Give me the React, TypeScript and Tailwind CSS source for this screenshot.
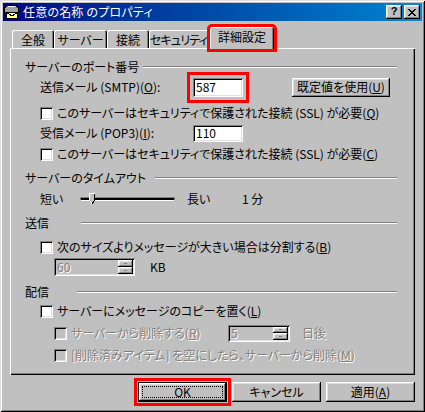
import React from 'react';

// classic 3D bevels
const sunken =
  'shadow-[inset_1px_1px_0_#808080,inset_-1px_-1px_0_#fff,inset_2px_2px_0_#000,inset_-2px_-2px_0_#dfdfdf]';
const raised =
  'shadow-[inset_-1px_-1px_0_#000,inset_1px_1px_0_#fff,inset_-2px_-2px_0_#808080,inset_2px_2px_0_#dfdfdf]';
const grayed = 'text-[#808080] [text-shadow:1px_1px_0_#fff]';

function Checkbox({ disabled = false }: { disabled?: boolean }) {
  return <div className={`w-[13px] h-[13px] shrink-0 ${disabled ? 'bg-[#c0c0c0]' : 'bg-white'} ${sunken}`} />;
}

function GroupHead({ label, w, h = 'h-[20px]', className = '' }: { label: string; w: string; h?: string; className?: string }) {
  return (
    <div className={`flex items-center ${h} ${className}`}>
      <span className={`shrink-0 ${w}`}>{label}</span>
      <div className="flex-1 h-[2px] border-t border-b border-t-[#808080] border-b-white" />
    </div>
  );
}

function SpinButtons({ w }: { w: string }) {
  return (
    <div className={`flex flex-col ${w} h-full`}>
      {[0, 1].map((i) => (
        <div key={i} className={`flex-1 bg-[#c0c0c0] flex items-center justify-center ${raised}`}>
          <div className="w-[3px] h-[1px] bg-[#808080]" />
        </div>
      ))}
    </div>
  );
}

function Spinner({ value, w, h }: { value: string; w: string; h: string }) {
  return (
    <div className={`flex ${w} ${h} bg-[#c0c0c0] p-[2px] ${sunken}`}>
      <div className={`flex-1 flex items-center pl-[1px] ${grayed}`}>{value}</div>
      <SpinButtons w="w-[15px]" />
    </div>
  );
}

function CloseGlyph() {
  const rows = ['11000011', '01100110', '00111100', '00011000', '00111100', '01100110', '11000011'];
  return (
    <svg width="8" height="7" viewBox="0 0 8 7" shapeRendering="crispEdges">
      {rows.map((r, y) =>
        r.split('').map((c, x) => (c === '1' ? <rect key={`${x}-${y}`} x={x} y={y} width="1" height="1" fill="#000" /> : null))
      )}
    </svg>
  );
}

function Tab({ label, w, selected = false, className = '' }: { label: string; w: string; selected?: boolean; className?: string }) {
  if (selected) {
    return (
      <div
        className={`relative z-10 ${w} h-[22px] -mb-[1px] -ml-[2px] bg-[#c0c0c0] rounded-t-[2px] flex items-center justify-center pb-[3px] shadow-[inset_1px_1px_0_#fff,inset_-1px_0_0_#000,inset_-2px_0_0_#808080] outline-3 outline-[#ff0000] ${className}`}
      >
        {label}
      </div>
    );
  }
  return (
    <div
      className={`${w} h-[18px] bg-[#c0c0c0] rounded-t-[2px] flex items-center justify-center pt-[1px] whitespace-nowrap shadow-[inset_1px_1px_0_#fff,inset_-1px_0_0_#000,inset_-2px_0_0_#808080] ${className}`}
    >
      {label}
    </div>
  );
}

export default function App() {
  return (
    <div
      className={`w-[425px] h-[412px] bg-[#c0c0c0] p-[3px] text-[12px] leading-none text-black font-['Noto_Sans_CJK_JP',sans-serif] [font-feature-settings:'palt'] shadow-[inset_1px_1px_0_#dfdfdf,inset_-1px_-1px_0_#000,inset_2px_2px_0_#fff,inset_-2px_-2px_0_#808080]`}
    >
      {/* title bar */}
      <div className="h-[18px] flex items-center bg-linear-to-r from-[#000080] to-[#1084d0] pr-[2px]">
        <svg width="16" height="16" viewBox="0 0 16 16" className="ml-[1px]" shapeRendering="crispEdges">
          <path d="M3.5 1.5h8l3 3v4h-14v-4z" fill="#a0a0a0" stroke="#000" />
          <path d="M4 2.5h7" stroke="#fff" />
          <rect x="2.5" y="8.5" width="11" height="6" fill="#ffff80" stroke="#000" />
          <path d="M2.5 8.5l5.5 3.5l5.5-3.5" stroke="#000" fill="none" />
        </svg>
        <span className="ml-[3px] text-white tracking-[0.2px]">任意の名称 のプロパティ</span>
        <div className="flex-1" />
        <div className={`w-[16px] h-[14px] bg-[#c0c0c0] flex items-center justify-center ${raised}`}>
          <span className="font-['Liberation_Sans',sans-serif] font-bold text-[11px] leading-none pb-[1px]">?</span>
        </div>
        <div className={`w-[16px] h-[14px] ml-[2px] bg-[#c0c0c0] flex items-center justify-center ${raised}`}>
          <CloseGlyph />
        </div>
      </div>

      <div className="px-[7px]">
        {/* tabs */}
        <div className="mt-[6px] h-[21px] flex items-end pl-[2px] relative z-10">
          <Tab label="全般" w="w-[42px]" />
          <Tab label="サーバー" w="w-[53px]" />
          <Tab label="接続" w="w-[42px]" />
          <Tab label="セキュリティ" w="w-[63px]" className="tracking-[-0.8px] pr-[4px]" />
          <Tab label="詳細設定" w="w-[64px]" selected />
        </div>

        {/* panel */}
        <div className="h-[327px] pt-[9px] pl-[15px] pr-[18px] shadow-[inset_1px_1px_0_#fff,inset_-1px_-1px_0_#000,inset_-2px_-2px_0_#808080]">
          <GroupHead label="サーバーのポート番号" w="w-[118px]" />

          <div className="flex items-center h-[20px] ml-[15px]">
            <span className="w-[153px] shrink-0">
              送信メール (SMTP)(<u>O</u>):
            </span>
            <div className={`w-[50px] h-[19px] bg-white flex items-center pl-[3px] ${sunken} outline-3 outline-[#ff0000] outline-offset-3`}>587</div>
            <div className={`ml-[49px] w-[98px] h-[19px] flex items-center justify-center ${raised}`}>
              既定値を使用(<u>U</u>)
            </div>
          </div>

          <div className="flex items-center gap-[4px] h-[20px] ml-[15px] mt-[6px]">
            <Checkbox />
            <span>
              このサーバーはセキュリティで保護された接続 (SSL) が必要(<u>Q</u>)
            </span>
          </div>

          <div className="flex items-center h-[20px] ml-[15px]">
            <span className="w-[153px] shrink-0">
              受信メール (POP3)(<u>I</u>):
            </span>
            <div className={`w-[50px] h-[17px] bg-white flex items-center pl-[3px] ${sunken}`}>110</div>
          </div>

          <div className="flex items-center gap-[4px] h-[20px] ml-[15px] mt-[1px]">
            <Checkbox />
            <span>
              このサーバーはセキュリティで保護された接続 (SSL) が必要(<u>C</u>)
            </span>
          </div>

          <GroupHead label="サーバーのタイムアウト" w="w-[130px]" className="mt-[4px]" />

          <div className="flex items-center h-[20px] ml-[15px] mt-[1px]">
            <span className="w-[40px] shrink-0">短い</span>
            <div className="relative w-[95px] h-[12px] flex items-center">
              <div className="w-full h-[4px] border-t border-t-[#808080] border-b border-b-white bg-black border-x border-x-[#808080]" />
              <svg width="7" height="12" viewBox="0 0 7 12" className="absolute left-[9px] top-0" shapeRendering="crispEdges">
                <path d="M0.5 0.5h5v7l-2.5 3l-2.5-3z" fill="#c0c0c0" />
                <path d="M0.5 8V0.5h5" stroke="#fff" fill="none" />
                <path d="M5.5 0.5v7l-2.5 3.5" stroke="#000" fill="none" />
                <path d="M0.5 7.5l2.5 3" stroke="#fff" fill="none" />
              </svg>
            </div>
            <span className="ml-[12px] w-[55px] shrink-0">長い</span>
            <span>1 分</span>
          </div>

          <GroupHead label="送信" w="w-[56px]" className="mt-[4px]" />

          <div className="flex items-center gap-[4px] h-[20px] ml-[15px] mt-[4px]">
            <Checkbox />
            <span>
              次のサイズよりメッセージが大きい場合は分割する(<u>B</u>)
            </span>
          </div>

          <div className="flex items-center h-[20px] ml-[29px]">
            <Spinner value="60" w="w-[81px]" h="h-[18px]" />
            <span className="ml-[15px]">KB</span>
          </div>

          <GroupHead label="配信" w="w-[52px]" h="h-[19px]" className="mt-[5px]" />

          <div className="flex items-center gap-[4px] h-[20px] ml-[15px]">
            <Checkbox />
            <span>
              サーバーにメッセージのコピーを置く(<u>L</u>)
            </span>
          </div>

          <div className="flex items-center gap-[4px] h-[20px] ml-[29px] mt-[2px]">
            <Checkbox disabled />
            <span className={`w-[153px] shrink-0 ${grayed}`}>
              サーバーから削除する(<u>R</u>)
            </span>
            <Spinner value="5" w="w-[62px]" h="h-[17px]" />
            <span className={`ml-[8px] ${grayed}`}>日後</span>
          </div>

          <div className="flex items-center gap-[4px] h-[20px] ml-[29px] mt-[2px]">
            <Checkbox disabled />
            <span className={grayed}>
              [削除済みアイテム] を空にしたら、サーバーから削除(<u>M</u>)
            </span>
          </div>
        </div>

        {/* dialog buttons */}
        <div className="mt-[7px] flex justify-end gap-[5px]">
          <div className="relative w-[89px] h-[20px] border border-black outline-3 outline-[#ff0000] outline-offset-1">
            <div className={`w-full h-full flex items-center justify-center ${raised}`}>OK</div>
            <div className="absolute inset-[3px] border border-dotted border-black" />
          </div>
          <div className={`w-[89px] h-[20px] flex items-center justify-center ${raised}`}>キャンセル</div>
          <div className={`w-[89px] h-[20px] flex items-center justify-center ${raised}`}>
            適用(<u>A</u>)
          </div>
        </div>
      </div>
    </div>
  );
}
